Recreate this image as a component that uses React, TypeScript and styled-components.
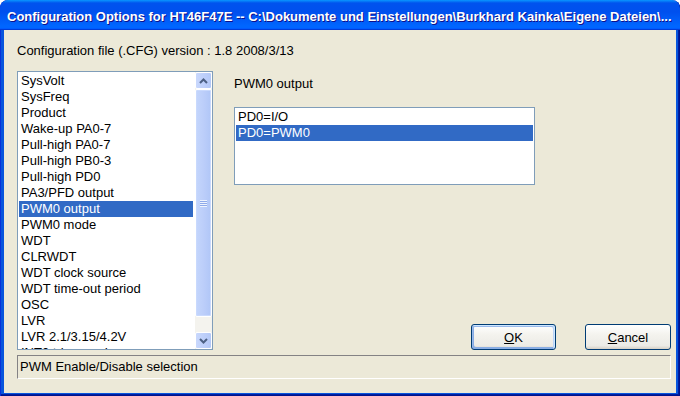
import React from 'react';
import styled, { createGlobalStyle } from 'styled-components';

const GlobalStyle = createGlobalStyle`
  html, body {
    margin: 0;
    padding: 0;
    background: #ffffff;
  }
  body {
    font-family: "Liberation Sans", Arial, sans-serif;
    font-size: 13px;
    color: #000;
  }
`;

const Window = styled.div`
  width: 680px;
  height: 396px;
  box-sizing: border-box;
  display: flex;
  flex-direction: column;
  padding: 0 4px 3px 4px;
  background: #0855dd;
  border-radius: 8px 8px 0 0;
  overflow: hidden;
  box-shadow: inset 1px 0 #0831d9, inset -1px -1px #00138c, inset -2px -2px #001ea0;
`;

const TitleBar = styled.div`
  height: 30px;
  box-sizing: border-box;
  margin: 0 -4px;
  padding: 2px 0 0 7px;
  display: flex;
  align-items: center;
  background: linear-gradient(180deg, #0997ff, #0053ee 10%, #0050ee 40%, #0066ff 86%, #0066ff 92%, #005bff 95%, #003dd7 97%, #003dd7);
  color: #fff;
  font-family: "Liberation Sans", Arial, sans-serif;
  font-weight: bold;
  font-size: 13px;
  white-space: nowrap;
  overflow: hidden;
  text-shadow: 1px 1px #0f1089;
  border-radius: 8px 8px 0 0;
`;

const Client = styled.div`
  flex: 1;
  display: flex;
  flex-direction: column;
  background: #ece9d8;
  padding: 13px 5px 14px 13px;
`;

const VersionText = styled.div`
  line-height: 16px;
`;

const Main = styled.div`
  margin-top: 12px;
  height: 279px;
  display: flex;
`;

const ListBox = styled.div`
  width: 196px;
  box-sizing: border-box;
  border: 1px solid #7f9db9;
  background: #fff;
  display: flex;
  overflow: hidden;
`;

const Items = styled.div`
  flex: 1;
  padding: 1px;
  overflow: hidden;
`;

const Item = styled.div<{ $selected?: boolean }>`
  height: 16px;
  line-height: 16px;
  padding-left: 2px;
  white-space: nowrap;
  background: ${p => (p.$selected ? '#316ac5' : 'transparent')};
  color: ${p => (p.$selected ? '#fff' : '#000')};
`;

const ScrollBar = styled.div`
  width: 17px;
  display: flex;
  flex-direction: column;
  background: #f4f3ee;
  border-left: 1px solid #fff;
`;

const ArrowButton = styled.div`
  height: 17px;
  box-sizing: border-box;
  display: flex;
  align-items: center;
  justify-content: center;
  border: 1px solid #fff;
  border-radius: 2px;
  background: linear-gradient(90deg, #c9d8fc, #bccefa 60%, #b4c8f6);
`;

const Thumb = styled.div`
  height: 228px;
  box-sizing: border-box;
  display: flex;
  align-items: center;
  justify-content: center;
  border: 1px solid #fff;
  border-radius: 2px;
  background: linear-gradient(90deg, #c4d6fc, #bccefa 50%, #b0c6f7);
  box-shadow: inset 0 0 0 1px #c9d9fd;
`;

const Track = styled.div`
  flex: 1;
`;

const Grip = styled.div`
  width: 7px;
  height: 7px;
  background: repeating-linear-gradient(180deg, #eef3fe 0 1px, #8faaea 1px 2px);
`;

const RightPane = styled.div`
  flex: 1;
  padding-left: 21px;
  display: flex;
  flex-direction: column;
`;

const PaneLabel = styled.div`
  margin-top: 5px;
  line-height: 16px;
`;

const OptionList = styled.div`
  margin-top: 15px;
  width: 301px;
  height: 78px;
  box-sizing: border-box;
  border: 1px solid #7f9db9;
  padding: 1px;
  background: #fff;
`;

const ButtonRow = styled.div`
  margin-top: auto;
  display: flex;
  justify-content: flex-end;
  gap: 29px;
`;

const Button = styled.button<{ $default?: boolean; $w: number }>`
  width: ${p => p.$w}px;
  height: 26px;
  box-sizing: border-box;
  border: 1px solid #003c74;
  border-radius: 3px;
  background: linear-gradient(180deg, #ffffff, #f4f3ee 40%, #ecebe6 86%, #d6d0c5);
  font-family: "Liberation Sans", Arial, sans-serif;
  font-size: 13px;
  color: #000;
  padding: 0;
  box-shadow: ${p =>
    p.$default
      ? 'inset -1px 1px #cee7ff, inset 1px 2px #98b8ea, inset -2px 2px #bcd4f6, inset 1px -1px #89ade4, inset 2px -2px #89ade4'
      : 'none'};
`;

const StatusBar = styled.div`
  margin-top: 5px;
  height: 24px;
  box-sizing: border-box;
  border: 1px solid;
  border-color: #848284 #fff #fff #848284;
  line-height: 22px;
  padding-left: 2px;
  white-space: nowrap;
`;

const Chevron = ({ up }: { up?: boolean }) => (
  <svg width="9" height="6" viewBox="0 0 9 6">
    <path
      d={up ? 'M1 5 L4.5 1.5 L8 5' : 'M1 1 L4.5 4.5 L8 1'}
      fill="none"
      stroke="#4d6185"
      strokeWidth="2"
    />
  </svg>
);

const entries = [
  'SysVolt',
  'SysFreq',
  'Product',
  'Wake-up PA0-7',
  'Pull-high PA0-7',
  'Pull-high PB0-3',
  'Pull-high PD0',
  'PA3/PFD output',
  'PWM0 output',
  'PWM0 mode',
  'WDT',
  'CLRWDT',
  'WDT clock source',
  'WDT time-out period',
  'OSC',
  'LVR',
  'LVR 2.1/3.15/4.2V',
  'INT0 trigger edge',
];

const App: React.FC = () => (
  <>
    <GlobalStyle />
    <Window>
      <TitleBar>
        Configuration Options for HT46F47E -- C:\Dokumente und Einstellungen\Burkhard Kainka\Eigene Dateien\...
      </TitleBar>
      <Client>
        <VersionText>Configuration file (.CFG) version : 1.8 2008/3/13</VersionText>
        <Main>
          <ListBox>
            <Items>
              {entries.map(e => (
                <Item key={e} $selected={e === 'PWM0 output'}>
                  {e}
                </Item>
              ))}
            </Items>
            <ScrollBar>
              <ArrowButton>
                <Chevron up />
              </ArrowButton>
              <Thumb>
                <Grip />
              </Thumb>
              <Track />
              <ArrowButton>
                <Chevron />
              </ArrowButton>
            </ScrollBar>
          </ListBox>
          <RightPane>
            <PaneLabel>PWM0 output</PaneLabel>
            <OptionList>
              <Item>PD0=I/O</Item>
              <Item $selected>PD0=PWM0</Item>
            </OptionList>
            <ButtonRow>
              <Button $default $w={85}>
                <u>O</u>K
              </Button>
              <Button $w={86}>
                <u>C</u>ancel
              </Button>
            </ButtonRow>
          </RightPane>
        </Main>
        <StatusBar>PWM Enable/Disable selection</StatusBar>
      </Client>
    </Window>
  </>
);

export default App;
